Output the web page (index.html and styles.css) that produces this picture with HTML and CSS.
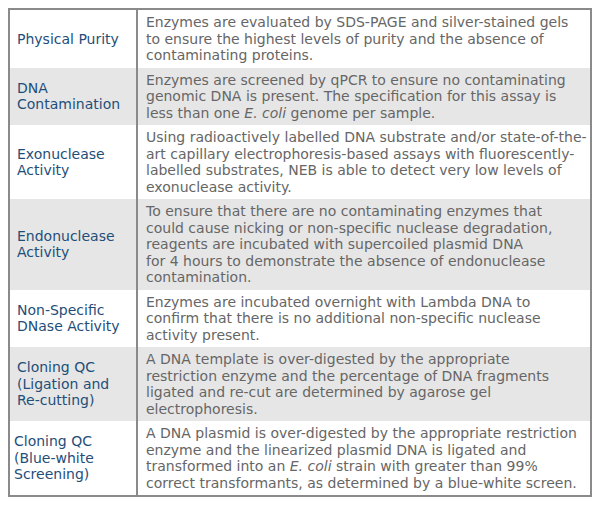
FILE: index.html
```html
<!DOCTYPE html>
<html>
<head>
<meta charset="utf-8">
<link rel="stylesheet" href="styles.css">
</head>
<body>
<table class="qc">
  <colgroup>
    <col class="c-name">
    <col class="c-desc">
  </colgroup>
  <tr>
    <th>Physical Purity</th>
    <td>Enzymes are evaluated by SDS-PAGE and silver-stained gels<br>to ensure the highest levels of purity and the absence of<br>contaminating proteins.</td>
  </tr>
  <tr class="alt">
    <th>DNA<br>Contamination</th>
    <td>Enzymes are screened by qPCR to ensure no contaminating<br>genomic DNA is present. The specification for this assay is<br>less than one <i>E. coli</i> genome per sample.</td>
  </tr>
  <tr>
    <th>Exonuclease<br>Activity</th>
    <td>Using radioactively labelled DNA substrate and/or state-of-the-<br>art capillary electrophoresis-based assays with fluorescently-<br>labelled substrates, NEB is able to detect very low levels of<br>exonuclease activity.</td>
  </tr>
  <tr class="alt">
    <th>Endonuclease<br>Activity</th>
    <td>To ensure that there are no contaminating enzymes that<br>could cause nicking or non-specific nuclease degradation,<br>reagents are incubated with supercoiled plasmid DNA<br>for 4 hours to demonstrate the absence of endonuclease<br>contamination.</td>
  </tr>
  <tr>
    <th>Non-Specific<br>DNase Activity</th>
    <td>Enzymes are incubated overnight with Lambda DNA to<br>confirm that there is no additional non-specific nuclease<br>activity present.</td>
  </tr>
  <tr class="alt">
    <th>Cloning QC<br>(Ligation and<br>Re-cutting)</th>
    <td>A DNA template is over-digested by the appropriate<br>restriction enzyme and the percentage of DNA fragments<br>ligated and re-cut are determined by agarose gel<br>electrophoresis.</td>
  </tr>
  <tr>
    <th class="tight">Cloning QC<br>(Blue-white<br>Screening)</th>
    <td>A DNA plasmid is over-digested by the appropriate restriction<br>enzyme and the linearized plasmid DNA is ligated and<br>transformed into an <i>E. coli</i> strain with greater than 99%<br>correct transformants, as determined by a blue-white screen.</td>
  </tr>
</table>
</body>
</html>
```

FILE: styles.css
```css
body {
  margin: 8px;
  background: #fff;
  font-family: "DejaVu Sans", Verdana, sans-serif;
  font-size: 14px;
}
.qc {
  width: 584px;
  table-layout: fixed;
  border-collapse: collapse;
  border: 2px solid #8a8a8a;
  line-height: 16.5px;
}
.c-name {
  width: 128px;
}
.qc th, .qc td {
  padding: 4px 2px 4px 8px;
  vertical-align: top;
  text-align: left;
  font-weight: normal;
  white-space: nowrap;
  overflow: visible;
}
.qc th {
  padding-left: 7px;
  color: #1f4e79;
  vertical-align: middle;
  border-right: 2px solid #8a8a8a;
}
.qc th.tight {
  padding-left: 4px;
}
.qc td {
  color: #666;
}
.qc tr.alt {
  background: #e6e6e6;
}
```
